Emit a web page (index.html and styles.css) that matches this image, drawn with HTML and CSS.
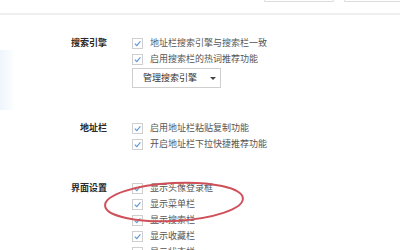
FILE: index.html
```html
<html lang="zh-CN">

<head>
    <meta charset="UTF-8">
    <title>设置</title>
    <link rel="stylesheet" href="styles.css">
</head>

<body>
    <div class="top-bar">
        <span class="top-box top-box-a"></span>
        <span class="top-box top-box-b"></span>
    </div>

    <div class="settings">
        <section class="group">
            <div class="group-title">搜索引擎</div>
            <div class="options">
                <label class="option"><span class="check"><svg viewBox="0 0 10 10"><polyline points="2,5.2 4.2,7.4 8.2,2.6" /></svg></span>地址栏搜索引擎与搜索栏一致</label>
                <label class="option"><span class="check"><svg viewBox="0 0 10 10"><polyline points="2,5.2 4.2,7.4 8.2,2.6" /></svg></span>启用搜索栏的热词推荐功能</label>
                <div class="select">管理搜索引擎<span class="caret"></span></div>
            </div>
        </section>

        <section class="group">
            <div class="group-title">地址栏</div>
            <div class="options">
                <label class="option"><span class="check"><svg viewBox="0 0 10 10"><polyline points="2,5.2 4.2,7.4 8.2,2.6" /></svg></span>启用地址栏粘贴复制功能</label>
                <label class="option"><span class="check"><svg viewBox="0 0 10 10"><polyline points="2,5.2 4.2,7.4 8.2,2.6" /></svg></span>开启地址栏下拉快捷推荐功能</label>
            </div>
        </section>

        <section class="group">
            <div class="group-title">界面设置</div>
            <div class="options">
                <label class="option"><span class="check"><svg viewBox="0 0 10 10"><polyline points="2,5.2 4.2,7.4 8.2,2.6" /></svg></span>显示头像登录框</label>
                <label class="option"><span class="check"><svg viewBox="0 0 10 10"><polyline points="2,5.2 4.2,7.4 8.2,2.6" /></svg></span>显示菜单栏</label>
                <label class="option"><span class="check"><svg viewBox="0 0 10 10"><polyline points="2,5.2 4.2,7.4 8.2,2.6" /></svg></span>显示搜索栏</label>
                <label class="option"><span class="check"><svg viewBox="0 0 10 10"><polyline points="2,5.2 4.2,7.4 8.2,2.6" /></svg></span>显示收藏栏</label>
                <label class="option"><span class="check"></span>显示状态栏</label>
            </div>
        </section>
    </div>

    <!-- red hand-drawn mark around 显示菜单栏 -->
    <svg class="mark" viewBox="0 0 400 250">
        <ellipse cx="174" cy="202" rx="69" ry="19" transform="rotate(-3 174 202)" />
    </svg>
</body>

</html>
```

FILE: styles.css
```css
body {
    position: relative;
    margin: 0;
    padding: 0;
    width: 400px;
    height: 250px;
    overflow: hidden;
    background-color: #fff;
    font-family: "Noto Sans CJK SC", "Noto Sans", sans-serif;
    font-size: 9px;
    line-height: 16px;
    color: #555;
}

.top-bar {
    height: 13px;
    display: flex;
    justify-content: flex-end;
    align-items: flex-end;
    gap: 10px;
    border-bottom: 2px solid #efefef;
}

.top-box {
    height: 20px;
    margin-bottom: 11px;
    border: 1px solid #dcdcdc;
    border-radius: 1px;
}

.top-box-a {
    width: 68px;
}

.top-box-b {
    width: 60px;
    margin-right: -6px;
}

.settings {
    padding-top: 20px;
    display: flex;
    flex-direction: column;
    gap: 28px;
    background: linear-gradient(90deg, #eef5fc, #fff 16px) no-repeat 0 35px / 16px 60px;
}

.group {
    display: grid;
    grid-template-columns: 107px 1fr;
    column-gap: 25px;
}

.group-title {
    text-align: right;
    font-weight: bold;
    color: #2a2a2a;
}

.options {
    display: flex;
    flex-direction: column;
    align-items: flex-start;
}

.option {
    display: flex;
    align-items: center;
    gap: 7px;
    height: 16px;
    white-space: nowrap;
}

.check {
    width: 9px;
    height: 9px;
    border: 1px solid #cfcfcf;
    background: #fff;
    display: flex;
}

.check svg {
    width: 9px;
    height: 9px;
}

.check polyline {
    fill: none;
    stroke: #5b9ad8;
    stroke-width: 1.3;
}

.select {
    margin-top: 1px;
    margin-bottom: 4px;
    width: 77px;
    height: 18px;
    padding-left: 10px;
    border: 1px solid #cfcfcf;
    color: #333;
    line-height: 18px;
    display: flex;
    align-items: center;
}

.caret {
    margin-left: 13px;
    width: 0;
    height: 0;
    border-left: 3px solid transparent;
    border-right: 3px solid transparent;
    border-top: 3px solid #444;
}

.mark {
    position: absolute;
    left: 0;
    top: 0;
    width: 400px;
    height: 250px;
    pointer-events: none;
}

.mark ellipse {
    fill: none;
    stroke: #d0505a;
    stroke-width: 2;
}
```
